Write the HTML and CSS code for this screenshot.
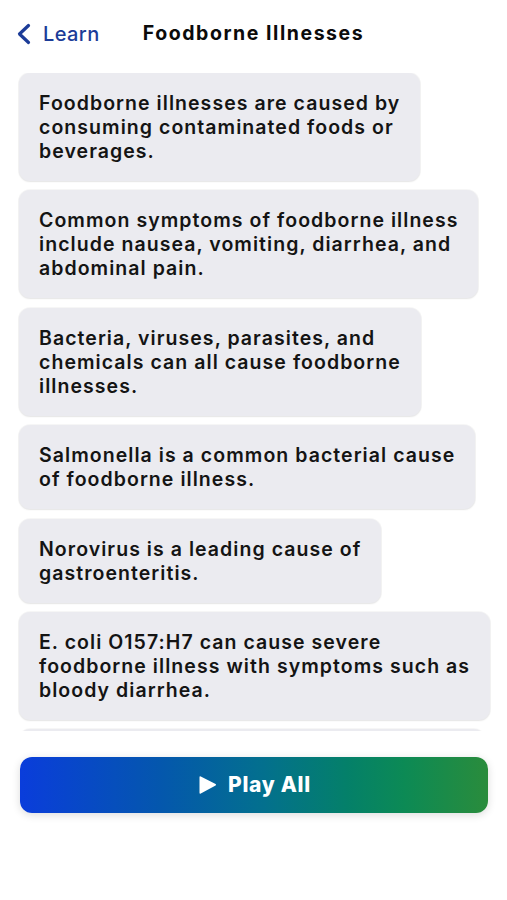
FILE: index.html
```html
<!DOCTYPE html>
<html lang="en">
<head>
<meta charset="utf-8">
<title>Foodborne Illnesses</title>
<link rel="stylesheet" href="styles.css">
</head>
<body>
<div class="screen">
  <header class="nav">
    <a class="back" href="#">
      <svg class="chev" width="16" height="22" viewBox="0 0 16 22"><path d="M12.5 2.5 L3.5 11 L12.5 19.5" fill="none" stroke="#1c3c98" stroke-width="3.2" stroke-linecap="round" stroke-linejoin="round"/></svg>
      <span>Learn</span>
    </a>
    <h1 class="title">Foodborne Illnesses</h1>
  </header>
  <main class="list">
    <div class="card">Foodborne illnesses are caused by<br>consuming contaminated foods or<br>beverages.</div>
    <div class="card">Common symptoms of foodborne illness<br>include nausea, vomiting, diarrhea, and<br>abdominal pain.</div>
    <div class="card">Bacteria, viruses, parasites, and<br>chemicals can all cause foodborne<br>illnesses.</div>
    <div class="card">Salmonella is a common bacterial cause<br>of foodborne illness.</div>
    <div class="card">Norovirus is a leading cause of<br>gastroenteritis.</div>
    <div class="card">E. coli O157:H7 can cause severe<br>foodborne illness with symptoms such as<br>bloody diarrhea.</div>
    <div class="card card-stub" aria-hidden="true"></div>
  </main>
  <button class="play">
    <svg class="tri" width="20" height="20" viewBox="0 0 20 20"><path d="M2.5 2.2 Q2.5 0.8 3.8 1.5 L18.6 9 Q19.6 9.8 18.6 10.6 L3.8 18.4 Q2.5 19.1 2.5 17.7 Z" fill="#fff"/></svg>
    <span class="play-label">Play All</span>
  </button>
</div>
</body>
</html>
```
FILE: styles.css
```css
* { box-sizing: border-box; }
html, body { margin: 0; padding: 0; background: #ffffff; }
body {
  font-family: Inter, "Noto Sans", "Liberation Sans", sans-serif;
  color: #111;
  width: 507px;
  height: 900px;
  overflow: hidden;
}
.screen { display: flex; flex-direction: column; }
.nav {
  position: relative;
  height: 66px;
  display: flex;
  align-items: center;
  justify-content: center;
}
.back {
  position: absolute;
  left: 16px;
  top: 22px;
  display: flex;
  align-items: center;
  gap: 11px;
  color: #1c3c98;
  text-decoration: none;
  font-size: 20px;
  font-weight: 500;
  letter-spacing: 0.4px;
}
.title {
  margin: 0;
  font-size: 19.5px;
  font-weight: 700;
  letter-spacing: 1.55px;
  color: #0b0b0b;
}
.list {
  margin-top: 7px;
  height: 658px;
  overflow: hidden;
  display: flex;
  flex-direction: column;
  align-items: flex-start;
  gap: 9.4px;
  padding: 0 19px;
}
.card {
  flex: none;
  background: #ebebf0;
  border-radius: 11px;
  padding: 18px 20px;
  font-size: 19.5px;
  line-height: 24px;
  font-weight: 600;
  letter-spacing: 1.05px;
  color: #141414;
  box-shadow: 0 0 0 1px rgba(0,0,0,0.035), 0 1px 2px rgba(0,0,0,0.07);
  white-space: nowrap;
}
.card-stub {
  width: 466px;
  height: 108px;
  padding: 0;
}
.play {
  margin: 26px 19px 0 20px;
  height: 56px;
  border: none;
  border-radius: 12px;
  background: linear-gradient(90deg, #0a3ddb 0%, #0457ad 30%, #03708e 52%, #048069 70%, #0c8a55 82%, #2a8c3c 100%);
  box-shadow: 0 2px 8px rgba(0,0,0,0.14);
  display: flex;
  align-items: center;
  justify-content: center;
  gap: 11px;
  color: #fff;
  padding: 0;
}
.play-label {
  font-family: Inter, "Noto Sans", "Liberation Sans", sans-serif;
  font-size: 21px;
  line-height: 26px;
  font-weight: 800;
  letter-spacing: 0.7px;
}
.tri { display: block; }
```
